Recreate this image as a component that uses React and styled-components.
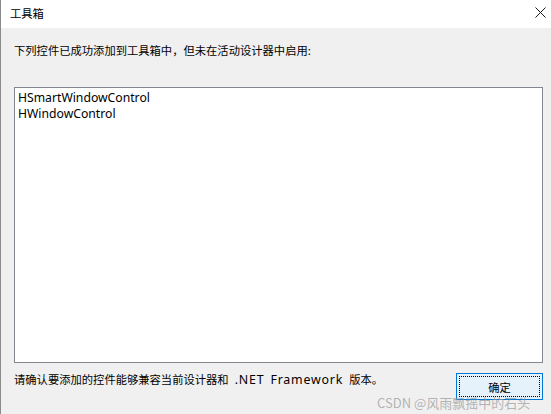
import styled, { createGlobalStyle } from 'styled-components';

const GlobalStyle = createGlobalStyle`
    html, body {
        margin: 0;
        padding: 0;
        background: #f0f0f0;
    }
    * {
        box-sizing: border-box;
    }
`;

const items = ['HSmartWindowControl', 'HWindowControl'];

function CloseIcon() {
    return (
        <svg width="11" height="11" viewBox="0 0 11 11">
            <path d="M0.5 0.5 L10.5 10.5 M10.5 0.5 L0.5 10.5" stroke="#1a1a1a" strokeWidth="1" fill="none" />
        </svg>
    );
}

export default function App() {
    return (
        <>
            <GlobalStyle />
            <Window>
                <TitleBar>
                    <Title>工具箱</Title>
                    <CloseButton>
                        <CloseIcon />
                    </CloseButton>
                </TitleBar>
                <Body>
                    <Message>下列控件已成功添加到工具箱中，但未在活动设计器中启用:</Message>
                    <ListBox>
                        {items.map((item) => (
                            <ListItem key={item}>{item}</ListItem>
                        ))}
                    </ListBox>
                    <Footer>
                        <Note>
                            请确认要添加的控件能够兼容当前设计器和<Latin> .NET Framework </Latin>版本。
                        </Note>
                        <OkButton>
                            <FocusRing>确定</FocusRing>
                        </OkButton>
                    </Footer>
                </Body>
                <Watermark>CSDN @风雨飘摇中的石头</Watermark>
            </Window>
        </>
    );
}

const Window = styled.div`
    position: relative;
    width: 551px;
    height: 414px;
    display: flex;
    flex-direction: column;
    border-left: 1px solid #8a8a8a;
    font-family: 'Noto Sans CJK SC', 'Noto Sans', sans-serif;
    font-size: 11.3px;
    color: #000;
    overflow: hidden;
`;

const TitleBar = styled.div`
    height: 28px;
    background: #ffffff;
    display: flex;
    align-items: center;
    justify-content: space-between;
    padding: 0 5px 3px 9px;
`;

const Title = styled.div`
    font-size: 11.3px;
    line-height: 16px;
`;

const CloseButton = styled.div`
    width: 12px;
    height: 12px;
    display: flex;
    align-items: center;
    justify-content: center;
`;

const Body = styled.div`
    flex: 1;
    display: flex;
    flex-direction: column;
    padding: 14px 8px 0 13px;
    background: #f0f0f0;
`;

const Message = styled.div`
    line-height: 16px;
`;

const ListBox = styled.div`
    margin-top: 29px;
    height: 276px;
    background: #ffffff;
    border: 1px solid #828790;
    padding: 2px 3px;
    display: flex;
    flex-direction: column;
`;

const ListItem = styled.div`
    line-height: 16px;
    font-family: 'Noto Sans', 'Noto Sans CJK SC', sans-serif;
    font-size: 12.2px;
`;

const Footer = styled.div`
    display: flex;
    justify-content: space-between;
    align-items: flex-start;
    padding-top: 8px;
`;

const Note = styled.div`
    line-height: 16px;
    white-space: pre;
`;

const Latin = styled.span`
    font-family: 'Noto Sans', sans-serif;
    font-size: 12.4px;
    letter-spacing: 0.8px;
    word-spacing: 2px;
`;

const OkButton = styled.div`
    margin-top: 2px;
    width: 87px;
    height: 27px;
    background: #e5f1fb;
    border: 1px solid #0078d7;
    padding: 2px;
    display: flex;
`;

const FocusRing = styled.div`
    flex: 1;
    border: 1px dotted #000;
    display: flex;
    align-items: center;
    justify-content: center;
    line-height: 16px;
`;

const Watermark = styled.div`
    position: absolute;
    left: 376px;
    top: 395px;
    font-size: 13px;
    line-height: 16px;
    color: rgba(150, 150, 150, 0.7);
    white-space: nowrap;
`;
